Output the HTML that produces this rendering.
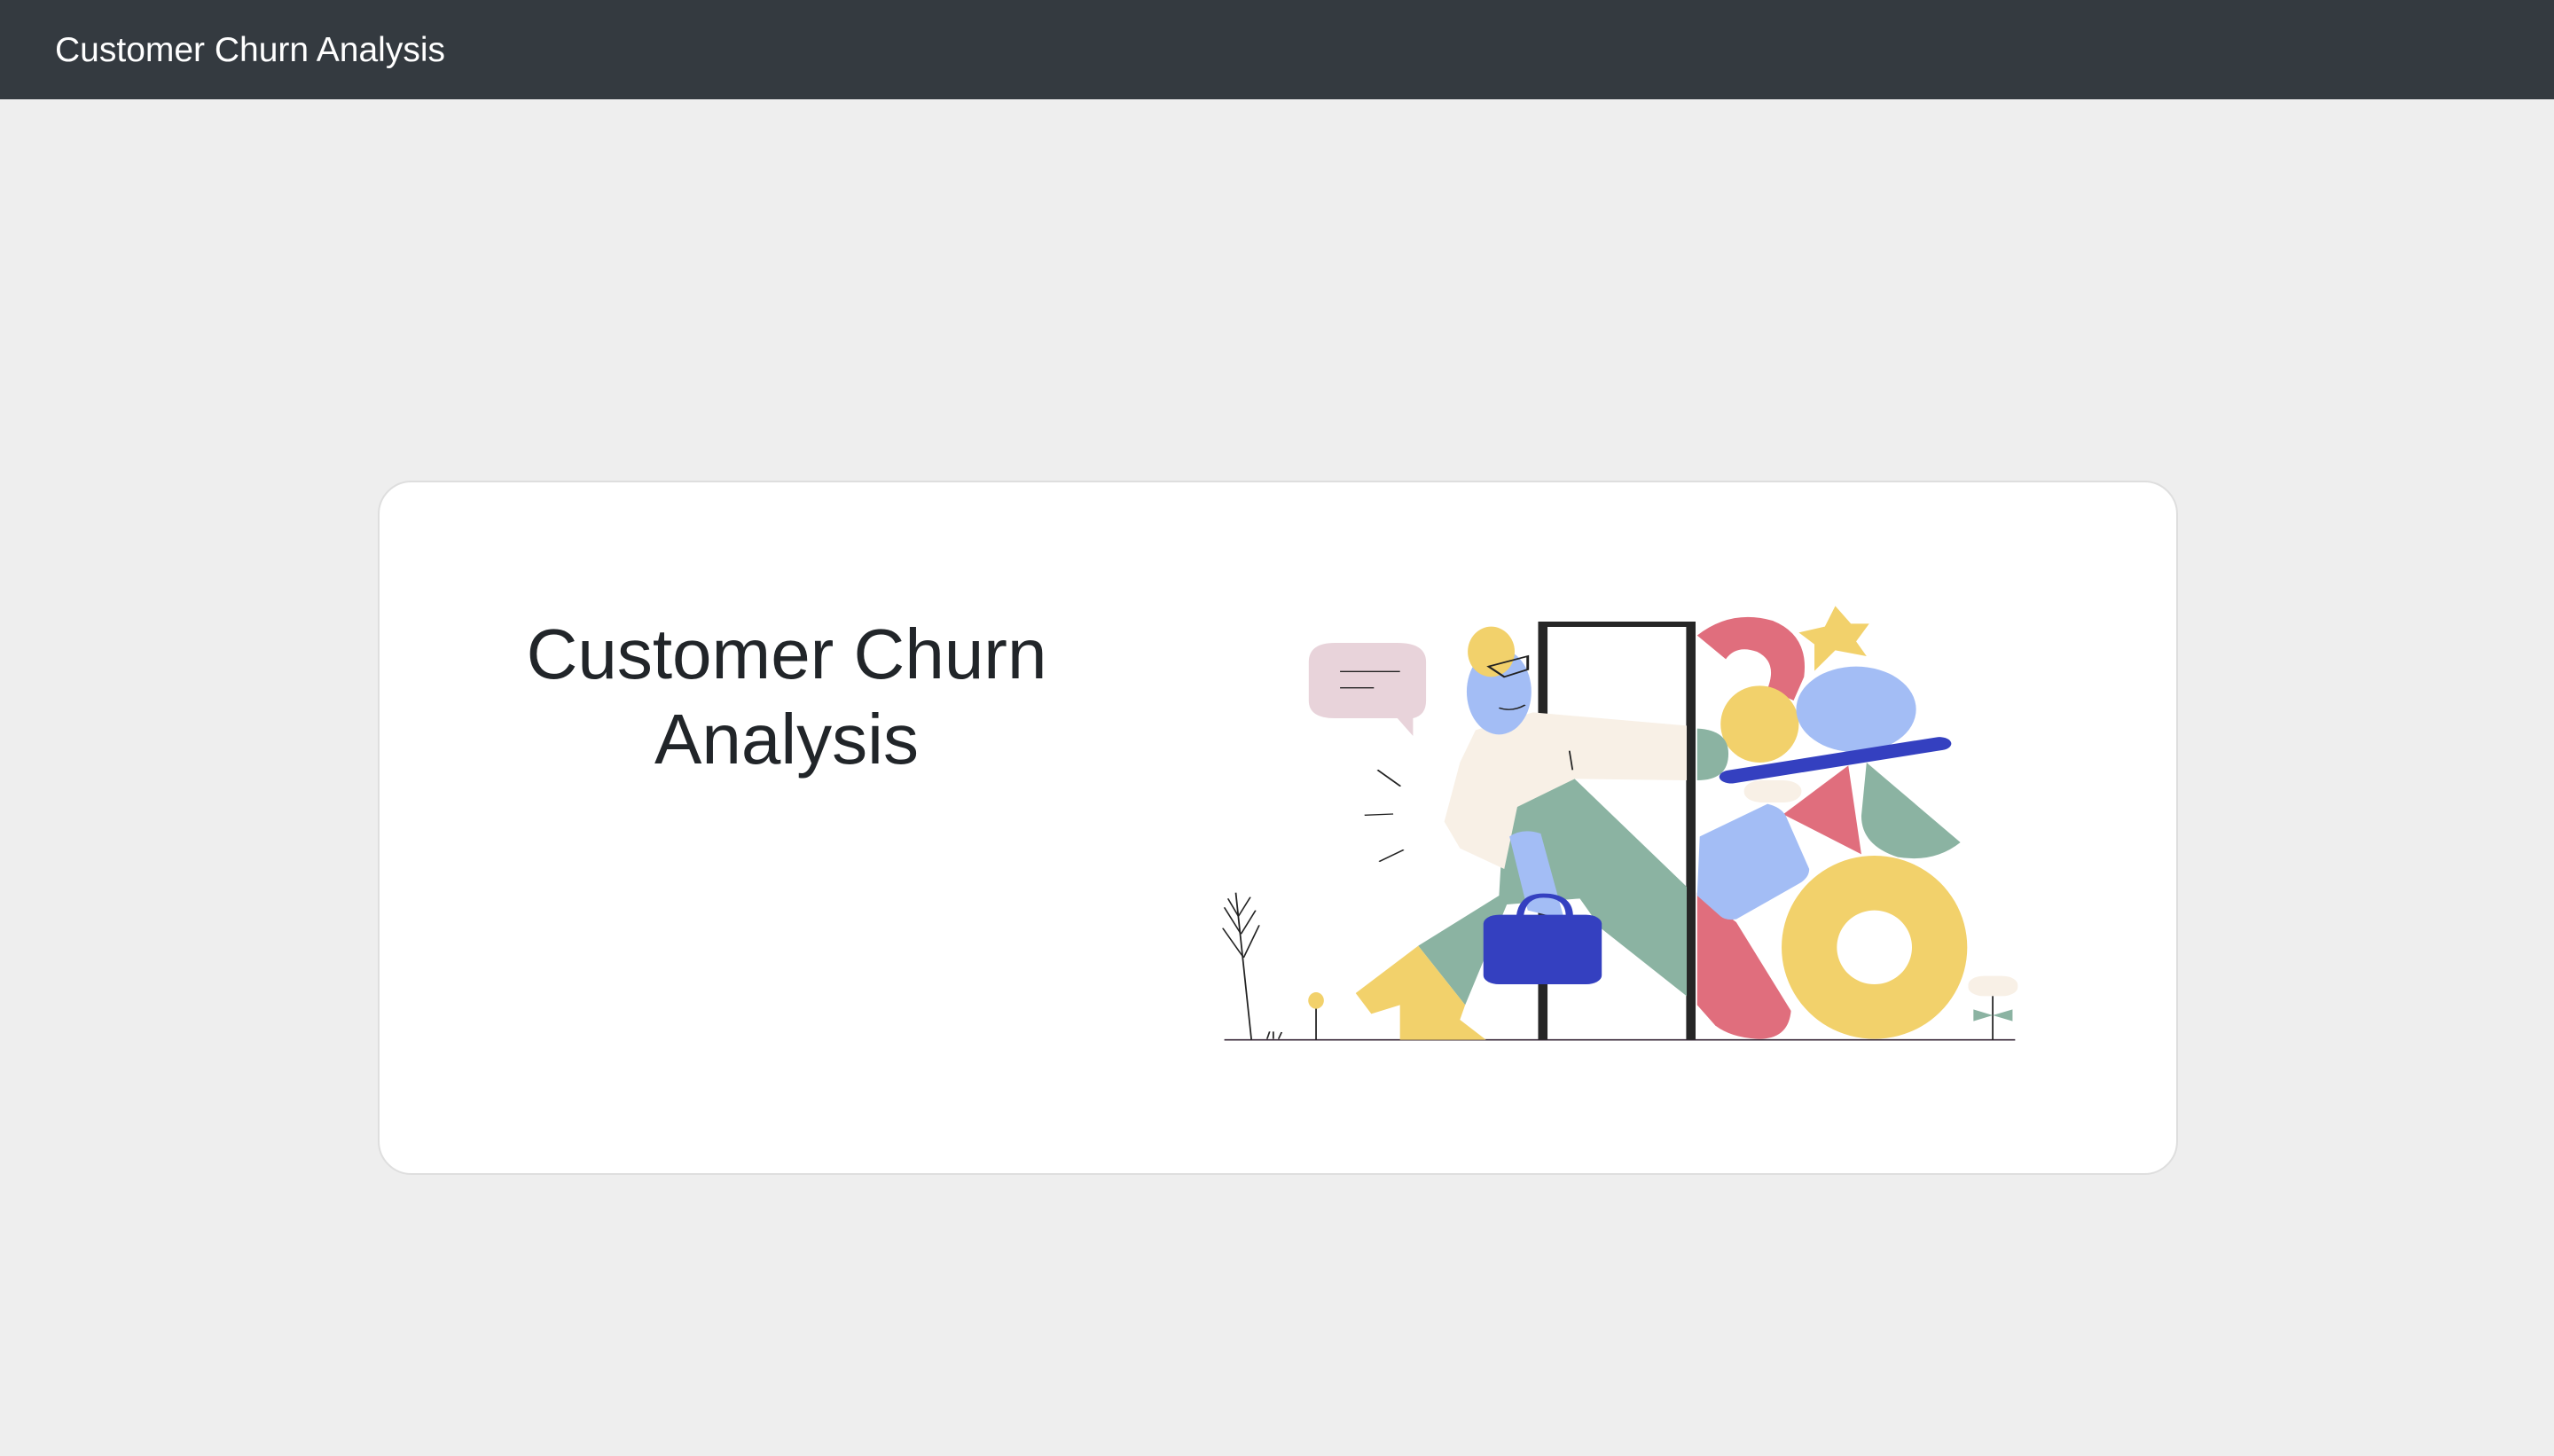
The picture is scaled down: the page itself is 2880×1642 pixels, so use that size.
<!DOCTYPE html>
<html><head><meta charset="utf-8"><style>
html,body{margin:0;padding:0;width:2880px;height:1642px;background:#eeeeee;overflow:hidden;font-family:"Liberation Sans",sans-serif}
.nav{position:absolute;left:0;top:0;width:2880px;height:112px;background:#343a40}
.nav span{position:absolute;left:62px;top:34px;font-size:39px;line-height:46px;color:#fff}
.card{position:absolute;left:426px;top:542px;width:2026px;height:779px;background:#fff;border:2px solid #dedede;border-radius:38px}
h1{position:absolute;left:540px;top:690px;width:694px;margin:0;text-align:center;font-weight:normal;font-size:80px;line-height:96px;color:#212529}
svg{position:absolute;left:1370px;top:680px;width:920px;height:510px}
</style></head><body>
<div class="nav"><span>Customer Churn Analysis</span></div>
<div class="card"></div>
<h1>Customer Churn<br>Analysis</h1>
<svg viewBox="0 0 1565 1530" preserveAspectRatio="none">
<line x1="18" y1="1478" x2="1535" y2="1478" stroke="#3a2a3a" stroke-width="5"/>
<path d="M230 135 H350 Q405 135 405 200 V330 Q405 380 380 390 L380 450 L350 390 H230 Q180 390 180 330 V200 Q180 135 230 135Z" fill="#e8d3da"/>
<line x1="240" y1="232" x2="355" y2="232" stroke="#222" stroke-width="4"/>
<line x1="240" y1="287" x2="305" y2="287" stroke="#222" stroke-width="4"/>
<g stroke="#222" stroke-width="4"><line x1="312" y1="565" x2="356" y2="620"/><line x1="287" y1="718" x2="342" y2="714"/><line x1="315" y1="875" x2="362" y2="835"/></g>
<g stroke="#222" stroke-width="3" fill="none"><path d="M70 1478 L40 980"/><path d="M55 1200 L15 1100 M55 1200 L85 1090 M50 1120 L18 1030 M50 1120 L78 1040 M45 1060 L25 1000 M45 1060 L68 995"/><path d="M100 1475 L105 1450 M112 1475 L112 1450 M122 1475 L128 1452"/><line x1="194" y1="1370" x2="194" y2="1478"/></g>
<ellipse cx="194" cy="1345" rx="15" ry="28" fill="#f2d16b"/>
<path d="M629 1478 V72 H913 V1478" fill="none" stroke="#262626" stroke-width="18"/>
<path d="M555 690 L690 595 L905 960 L905 1330 L740 1100 L700 1000 L560 1020 L480 1360 L390 1160 L545 990Z" fill="#8bb3a2"/>
<path d="M270 1320 L390 1160 L480 1360 L470 1410 L520 1478 L355 1478 L355 1360 L300 1390Z" fill="#f2d16b"/>
<path d="M500 430 L610 370 L905 415 L905 600 L690 595 L580 690 L555 900 L470 830 L440 740 L470 540Z" fill="#f8f0e6"/>
<line x1="680" y1="500" x2="686" y2="565" stroke="#222" stroke-width="3"/>
<ellipse cx="545" cy="300" rx="62" ry="145" fill="#a3bdf5"/>
<ellipse cx="530" cy="165" rx="45" ry="85" fill="#f2d16b"/>
<path d="M525 215 L600 180 L600 225 L555 250Z" fill="none" stroke="#222" stroke-width="5"/>
<path d="M545 355 Q570 370 595 345" fill="none" stroke="#222" stroke-width="4"/>
<path d="M565 790 Q590 760 625 780 L670 1070 L600 1040 Z" fill="#a3bdf5"/>
<path d="M585 1060 Q590 990 630 990 Q680 990 680 1060" fill="none" stroke="#3440c0" stroke-width="14"/>
<rect x="515" y="1055" width="227" height="235" rx="30" fill="#3440c0"/>
<path d="M925 110 Q990 20 1070 60 Q1140 110 1130 250 L1110 330 L1060 290 Q1080 200 1040 165 Q1000 140 980 190Z" fill="#e06e7d"/>
<path d="M1190 10 L1220 70 L1255 70 L1230 130 L1250 180 L1190 160 L1150 230 L1150 140 L1120 100 L1170 80Z" fill="#f2d16b"/>
<ellipse cx="1045" cy="410" rx="75" ry="130" fill="#f2d16b"/>
<ellipse cx="1230" cy="360" rx="115" ry="145" fill="#a3bdf5"/>
<path d="M925 425 Q985 430 985 510 Q985 600 925 600Z" fill="#8bb3a2"/>
<line x1="990" y1="588" x2="1390" y2="476" stroke="#3440c0" stroke-width="45" stroke-linecap="round"/>
<rect x="1015" y="600" width="110" height="75" rx="35" fill="#f8f0e6"/>
<path d="M1090 715 L1215 550 L1240 850Z" fill="#e06e7d"/>
<path d="M1250 540 L1430 810 Q1380 880 1310 860 Q1240 820 1240 720Z" fill="#8bb3a2"/>
<path d="M925 980 L1000 1080 L1105 1380 Q1100 1478 1040 1475 Q990 1470 960 1430 L925 1360Z" fill="#e06e7d"/>
<path d="M930 790 L1060 680 Q1085 690 1095 720 L1140 900 Q1140 930 1120 950 L1000 1070 Q980 1075 970 1060 L925 990Z" fill="#a3bdf5"/>
<path fill-rule="evenodd" d="M1265 855 a178 310 0 1 0 0.1 0Z M1265 1040 a72 125 0 1 0 0.1 0Z" fill="#f2d16b"/>
<rect x="1445" y="1262" width="95" height="68" rx="30" fill="#f8f0e6"/>
<line x1="1492" y1="1330" x2="1492" y2="1478" stroke="#222" stroke-width="3"/>
<path d="M1492 1395 L1455 1375 L1455 1415Z M1492 1395 L1530 1375 L1530 1415Z" fill="#8bb3a2"/>
</svg>
</body></html>
